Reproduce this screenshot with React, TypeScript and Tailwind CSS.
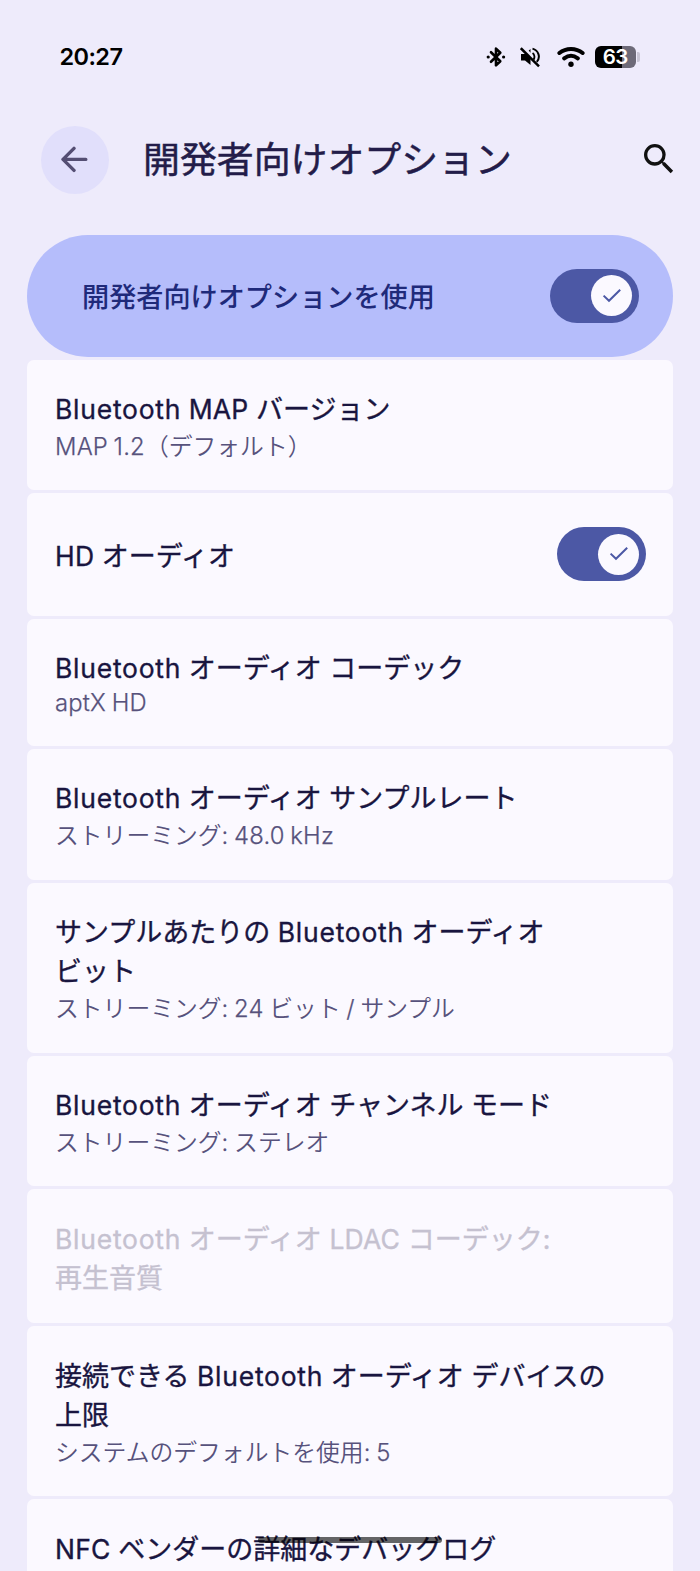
import { Fragment } from "react";
import { MdSearch } from "react-icons/md";

type Item = {
    title: string[];
    summary?: string;
    toggle?: boolean;
    disabled?: boolean;
    className: string;
    summaryClass?: string;
};

const items: Item[] = [
    { title: ["Bluetooth MAP バージョン"], summary: "MAP 1.2（デフォルト）", className: "h-[130px] pt-[28px]" },
    { title: ["HD オーディオ"], toggle: true, className: "h-[123px] items-center pb-px" },
    { title: ["Bluetooth オーディオ コーデック"], summary: "aptX HD", className: "h-[127px] pt-[28px]", summaryClass: "leading-[30px]" },
    { title: ["Bluetooth オーディオ サンプルレート"], summary: "ストリーミング: 48.0 kHz", className: "h-[130.5px] pt-[28px]" },
    { title: ["サンプルあたりの Bluetooth オーディオ", "ビット"], summary: "ストリーミング: 24 ビット / サンプル", className: "h-[170px] pt-[28px]" },
    { title: ["Bluetooth オーディオ チャンネル モード"], summary: "ストリーミング: ステレオ", className: "h-[130.5px] pt-[28px]" },
    { title: ["Bluetooth オーディオ LDAC コーデック:", "再生音質"], disabled: true, className: "h-[134px] pt-[29px]" },
    { title: ["接続できる Bluetooth オーディオ デバイスの", "上限"], summary: "システムのデフォルトを使用: 5", className: "h-[170px] pt-[29px]" },
    { title: ["NFC ベンダーの詳細なデバッグログ"], className: "h-[130px] pt-[29px]" },
];

// Latin words get their own face and tracking, kana and kanji stay in Noto
function Mixed({ text, latin }: { text: string; latin: string }) {
    return (
        <>
            {text.split(/([A-Za-z0-9.:/]+)/).map((part, i) =>
                i % 2 ? (
                    <span key={i} className={`${latin} ${part === "Bluetooth" ? "tracking-[0.75px]" : "tracking-[0.2px]"}`}>{part}</span>
                ) : (
                    <Fragment key={i}>{part}</Fragment>
                )
            )}
        </>
    );
}

function Toggle() {
    return (
        <div className="flex h-[54px] w-[88.5px] shrink-0 items-center justify-end rounded-full bg-[#4c58a5] pr-[6.5px]">
            <div className="flex size-[41px] items-center justify-center rounded-full bg-[#fbf9ff]">
                <svg width="20" height="16" viewBox="0 0 20 16" fill="none" stroke="#4c58a5" strokeWidth="2">
                    <path d="M1.6 7.6 7 12.8 18.2 1.8" />
                </svg>
            </div>
        </div>
    );
}

function StatusBar() {
    return (
        <div className="flex h-[114px] items-center pr-[60px] pl-[59.5px] text-black">
            <span className="font-['Inter'] text-[23.5px] leading-none font-semibold tracking-[-0.6px]">20:27</span>
            <div className="ml-auto flex items-center">
                <svg width="20" height="22" viewBox="0 0 20 22" fill="none" stroke="currentColor" strokeWidth="2.6" strokeLinejoin="round" strokeLinecap="round">
                    <path d="M5 6.2 14.3 15.2 10 19.4V2.6L14.3 6.8 5 15.8" />
                    <circle cx="2.2" cy="11" r="1.6" fill="currentColor" stroke="none" />
                    <circle cx="17.6" cy="11" r="1.6" fill="currentColor" stroke="none" />
                </svg>
                <svg className="ml-[14px]" width="20" height="22" viewBox="0 0 20 22" fill="none">
                    <path d="M1 8h4l5.5-5v16L5 14.5H1z" fill="currentColor" />
                    <path d="M12.5 7.2c2 1.3 2.4 4.3 1 6.6M12.5 2.6c6 1.6 8.4 8.6 4.3 13.2" stroke="currentColor" strokeWidth="2" />
                    <path d="M2.6 1.2 12 10.6" stroke="#eeebfb" strokeWidth="3.6" />
                    <path d="M.8 2.2 19 20.4" stroke="currentColor" strokeWidth="2.5" />
                </svg>
                <svg className="ml-[17px]" width="28" height="22" viewBox="0 0 28 22" fill="none" stroke="currentColor" strokeWidth="4" strokeLinecap="round">
                    <path d="M2.4 7C9 1.6 19 1.6 25.6 7M7.2 12.4c4.2-3.2 9.4-3.2 13.6 0" />
                    <circle cx="14" cy="18.2" r="2.7" fill="currentColor" stroke="none" />
                </svg>
                <div className="ml-[10px] flex h-[22px] w-[40.5px] items-center justify-center rounded-[6px] bg-linear-to-r from-black from-67% to-[#6d6a78] to-67% font-['Inter'] text-[20.5px] font-semibold tracking-[-0.6px] text-white">
                    63
                </div>
                <div className="ml-[1.5px] h-[10px] w-[3px] rounded-r-[2px] bg-[#c9c6d6]" />
            </div>
        </div>
    );
}

export default function App() {
    return (
        <div className="relative h-[1571px] w-[700px] overflow-hidden bg-[#eeebfb] font-['Noto_Sans_CJK_JP',sans-serif]">
            <StatusBar />

            <header className="flex h-[91px] items-center pr-[21.5px] pl-[41px]">
                <div className="flex size-[68px] items-center justify-center rounded-full bg-[#e1dffb]">
                    <svg width="28" height="28" viewBox="0 0 28 28" fill="none" stroke="#544e73" strokeWidth="3.4" strokeLinecap="round" strokeLinejoin="round">
                        <path d="M24.8 13.4H2.6M13 2.4 2 13.4l11 11" />
                    </svg>
                </div>
                <h1 className="ml-[34px] pb-[6px] text-[36.9px] leading-[48px] font-normal whitespace-nowrap text-[#231c49] [-webkit-text-stroke:0.5px]">開発者向けオプション</h1>
                <MdSearch className="mb-[2px] ml-auto size-[40px] text-[#111111]" />
            </header>

            <main className="flex flex-col gap-[3px] px-[27px] pt-[30px]">
                <div className="flex h-[122px] shrink-0 items-center justify-between rounded-full bg-[#b5bdfb] pr-[34.5px] pb-px pl-[55px]">
                    <span className="pt-[2px] text-[27.15px] font-medium text-[#1f2a7a]">開発者向けオプションを使用</span>
                    <Toggle />
                </div>

                {items.map((item) => (
                    <div
                        key={item.title[0]}
                        className={`flex shrink-0 justify-between rounded-[7px] bg-[#fbf9ff] pr-[27.5px] pl-[28px] whitespace-nowrap ${item.className}`}
                    >
                        <div>
                            {item.title.map((line) => (
                                <div key={line} className={`h-[39px] text-[27px] leading-[39px] font-normal [-webkit-text-stroke:0.35px] [word-spacing:1.5px] ${item.disabled ? "text-[#c5c1d0]" : "text-[#19153f]"}`}>
                                    <Mixed text={line} latin="font-['Inter'] text-[26.5px]" />
                                </div>
                            ))}
                            {item.summary && (
                                <div className={`text-[23.8px] font-[350] text-[#57527c] [word-spacing:0.3px] ${item.summaryClass ?? "leading-[35px]"}`}>
                                    <Mixed text={item.summary} latin="font-['Inter'] font-light text-[23.8px] [-webkit-text-stroke:0.25px]" />
                                </div>
                            )}
                        </div>
                        {item.toggle && <Toggle />}
                    </div>
                ))}
            </main>

            <div className="absolute top-[1537px] left-[258px] h-[6px] w-[184px] rounded-full bg-black/60" />
        </div>
    );
}
